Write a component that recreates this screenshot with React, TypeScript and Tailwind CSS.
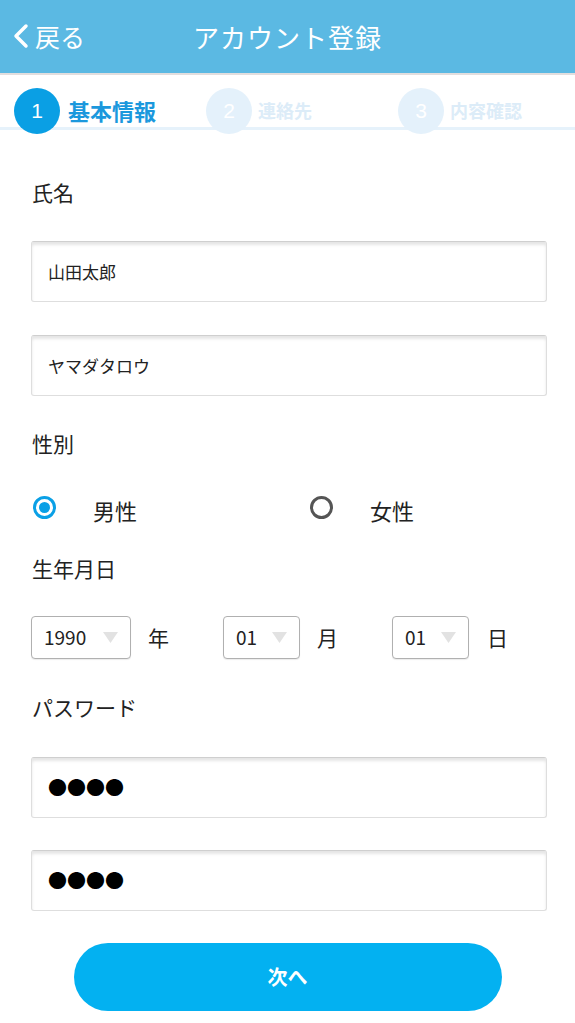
import { useState } from 'react';

const font = { fontFamily: '"Noto Sans CJK JP", "Noto Sans", sans-serif' };

function StepItem({ num, label, active }: { num: number; label: string; active?: boolean }) {
  return (
    <div className="flex w-[192px] shrink-0 items-center">
      <div
        className={
          active
            ? 'flex h-[46px] w-[46px] shrink-0 items-center justify-center rounded-full bg-[#0a9fe4] text-[21px] font-light text-white'
            : 'flex h-[46px] w-[46px] shrink-0 items-center justify-center rounded-full bg-[#e4f1fb] text-[21px] font-light text-white'
        }
        style={{ fontFamily: '"Liberation Sans", sans-serif' }}
      >
        {num}
      </div>
      <span
        className={
          active
            ? 'ml-[8px] mt-[-2px] text-[22px] font-bold text-[#1b98dd]'
            : 'ml-[6px] mt-[-2px] text-[18px] font-bold text-[#dcecf8]'
        }
      >
        {label}
      </span>
    </div>
  );
}

function TextField({ value, secret }: { value: string; secret?: boolean }) {
  return (
    <div className="flex h-[61px] items-center rounded-[3px] border border-[#dedede] border-t-[#cfcfcf] bg-white pl-[16px] shadow-[inset_0_3px_3px_rgba(0,0,0,0.1)]">
      {secret ? (
        <span className="text-[19px] text-black">{value}</span>
      ) : (
        <span className="text-[17px] text-[#222]">{value}</span>
      )}
    </div>
  );
}

function Radio({ checked, label, className }: { checked?: boolean; label: string; className?: string }) {
  return (
    <div className={`flex items-center ${className || ''}`}>
      {checked ? (
        <span className="flex h-[23px] w-[23px] items-center justify-center rounded-full border-[3px] border-[#0aa0e6]">
          <span className="h-[11px] w-[11px] rounded-full bg-[#0aa0e6]" />
        </span>
      ) : (
        <span className="h-[23px] w-[23px] rounded-full border-[3px] border-[#555]" />
      )}
      <span className="ml-[37px] mt-[6px] text-[22px] text-[#222]">{label}</span>
    </div>
  );
}

function Select({ value, width }: { value: string; width: string }) {
  return (
    <div className={`flex h-[43px] items-center justify-between rounded-[4px] border border-[#b0b0b0] bg-white pl-[12px] pr-[12px] shadow-[0_1px_1px_rgba(0,0,0,0.08)] ${width}`}>
      <span className="text-[19px] text-[#222]">{value}</span>
      <svg width="15" height="11" viewBox="0 0 15 11">
        <polygon points="0,0 15,0 7.5,11" fill="#e2e2e2" />
      </svg>
    </div>
  );
}

export default function App() {
  const [gender] = useState('male');

  return (
    <div className="min-h-[1023px] w-[575px] bg-white" style={font}>
      <header className="relative flex h-[75px] items-center border-b-2 border-[#e2dede] bg-[#5bb9e3] text-white">
        <div className="flex items-center pl-[13px]">
          <svg width="16" height="26" viewBox="0 0 16 26" className="mt-[-2px]">
            <polyline points="13,3 3,13 13,23" fill="none" stroke="white" strokeWidth="3.5" strokeLinecap="round" strokeLinejoin="round" />
          </svg>
          <span className="ml-[6px] text-[25px]">戻る</span>
        </div>
        <h1 className="absolute left-0 right-0 text-center text-[26px] tracking-[1px]">アカウント登録</h1>
      </header>

      <div className="relative h-[60px]">
        <div className="absolute left-0 right-0 top-[52px] h-[3px] bg-[#e6f2fb]" />
        <div className="relative flex pl-[14px] pt-[13px]">
          <StepItem num={1} label="基本情報" active />
          <StepItem num={2} label="連絡先" />
          <StepItem num={3} label="内容確認" />
        </div>
      </div>

      <main className="pl-[31px] pr-[28px] text-[#222]">
        <p className="mt-[42px] pl-[1px] text-[21px] leading-[30px]">氏名</p>
        <div className="mt-[34px]">
          <TextField value="山田太郎" />
        </div>
        <div className="mt-[33px]">
          <TextField value="ヤマダタロウ" />
        </div>

        <p className="mt-[32px] pl-[1px] text-[21px] leading-[30px]">性別</p>
        <div className="mt-[30px] flex pl-[2px]">
          <Radio checked={gender === 'male'} label="男性" className="w-[277px]" />
          <Radio checked={gender === 'female'} label="女性" />
        </div>

        <p className="mt-[26px] pl-[1px] text-[21px] leading-[30px]">生年月日</p>
        <div className="mt-[33px] flex items-center">
          <Select value="1990" width="w-[100px]" />
          <span className="ml-[17px] text-[21px]">年</span>
          <div className="ml-[54px]">
            <Select value="01" width="w-[77px]" />
          </div>
          <span className="ml-[17px] text-[21px]">月</span>
          <div className="ml-[54px]">
            <Select value="01" width="w-[77px]" />
          </div>
          <span className="ml-[18px] text-[21px]">日</span>
        </div>

        <p className="mt-[33px] pl-[1px] text-[21px] leading-[30px]">パスワード</p>
        <div className="mt-[35px]">
          <TextField value="●●●●" secret />
        </div>
        <div className="mt-[32px]">
          <TextField value="●●●●" secret />
        </div>

        <div className="mt-[32px] flex justify-center pr-[3px] pb-[13px]">
          <button className="h-[68px] w-[428px] rounded-full bg-[#03b1f1] text-[20px] font-bold text-white">次へ</button>
        </div>
      </main>
    </div>
  );
}
